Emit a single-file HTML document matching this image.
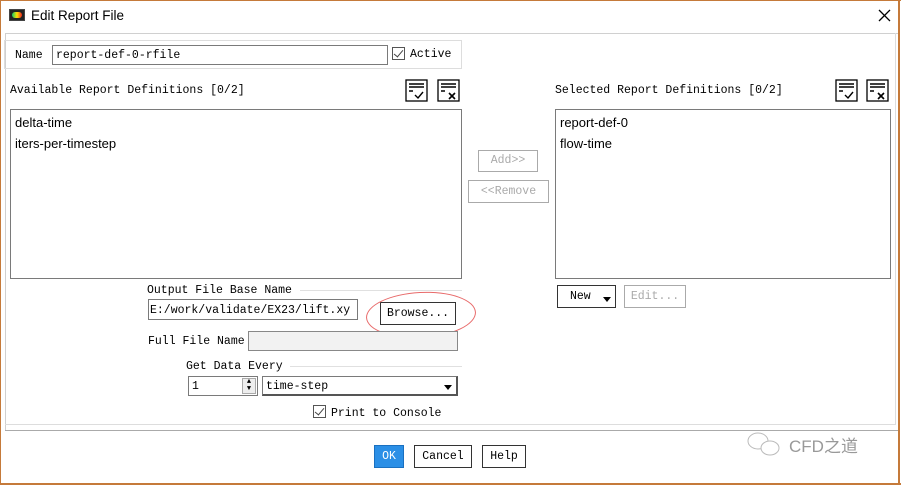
<!DOCTYPE html>
<html><head><meta charset="utf-8"><style>
*{margin:0;padding:0;box-sizing:border-box}
body{width:901px;height:485px;background:#fff;position:relative;overflow:hidden;font-family:"Liberation Mono",monospace;font-size:11.5px;color:#000}
.a{position:absolute}
.mono{font-family:"Liberation Mono","Noto Sans CJK SC",monospace;font-size:11.5px;white-space:nowrap}
.sans{font-family:"Liberation Sans","Noto Sans CJK SC",sans-serif;font-size:13px;white-space:nowrap}
.box{border:1px solid #7a7a7a;background:#fff}
.btn{border:1px solid #333;background:#fff;text-align:center;font-family:"Liberation Mono",monospace;font-size:11.5px;line-height:22px}
.dis{border:1px solid #aaa;color:#aaa}
.chk{border:1px solid #555;width:13px;height:13px;background:#fff}
.chk:after{content:"";position:absolute;left:3px;top:0px;width:4px;height:8px;border:solid #444;border-width:0 1.5px 1.5px 0;transform:rotate(40deg)}
</style></head><body>
<div class="a" style="left:0;top:0;width:901px;height:1px;background:#c57a3a"></div>
<div class="a" style="left:0;top:0;width:1px;height:485px;background:#c57a3a"></div>
<div class="a" style="left:898px;top:0;width:2px;height:485px;background:#c57a3a"></div>
<div class="a" style="left:0;top:483px;width:901px;height:2px;background:#c57a3a"></div>
<!-- title -->
<div class="a" style="left:9px;top:9px;width:16px;height:12px;background:#222;border:1px solid #444"><div style="position:absolute;left:2px;top:2px;width:10px;height:6px;background:linear-gradient(90deg,#1c6,#fd0,#e22);border-radius:3px"></div></div>
<div class="a sans" style="left:31px;top:8px;font-size:13.5px">Edit Report File</div>
<svg class="a" style="left:878px;top:9px" width="13" height="13"><path d="M1 1L12 12M12 1L1 12" stroke="#000" stroke-width="1.3"/></svg>
<div class="a" style="left:5px;top:33px;width:893px;height:1px;background:#d0d0d0"></div>
<div class="a" style="left:5px;top:33px;width:1px;height:398px;background:#d0d0d0"></div>
<!-- name group -->
<div class="a" style="left:4px;top:40px;width:458px;height:29px;border:1px solid #ddd"></div>
<div class="a mono" style="left:15px;top:49px">Name</div>
<div class="a box" style="left:52px;top:45px;width:336px;height:20px"></div>
<div class="a mono" style="left:56px;top:49px">report-def-0-rfile</div>
<div class="a chk" style="left:392px;top:47px"></div>
<div class="a mono" style="left:410px;top:48px">Active</div>
<!-- available -->
<div class="a mono" style="left:10px;top:84px">Available Report Definitions [0/2]</div>
<svg class="a" style="left:405px;top:79px" width="56" height="23"><rect x="1" y="1" width="21" height="21" fill="#fff" stroke="#000" stroke-width="1.3"/><path d="M4 5h15M4 8h15M4 12h4M10 16l3 3 5-6" stroke="#000" stroke-width="1.4" fill="none"/><rect x="33" y="1" width="21" height="21" fill="#fff" stroke="#000" stroke-width="1.3"/><path d="M36 5h15M36 8h15M36 12h4M44 14l6 6M50 14l-6 6" stroke="#000" stroke-width="1.6" fill="none"/></svg>
<div class="a box" style="left:10px;top:109px;width:452px;height:170px"></div>
<div class="a sans" style="left:15px;top:115px">delta-time</div>
<div class="a sans" style="left:15px;top:136px">iters-per-timestep</div>
<!-- middle buttons -->
<div class="a btn dis" style="left:478px;top:150px;width:60px;height:22px;line-height:20px">Add&gt;&gt;</div>
<div class="a btn dis" style="left:468px;top:180px;width:81px;height:23px;line-height:22px">&lt;&lt;Remove</div>
<!-- selected -->
<div class="a mono" style="left:555px;top:84px">Selected Report Definitions [0/2]</div>
<svg class="a" style="left:835px;top:79px" width="56" height="23"><rect x="1" y="1" width="21" height="21" fill="#fff" stroke="#000" stroke-width="1.3"/><path d="M4 5h15M4 8h15M4 12h4M10 16l3 3 5-6" stroke="#000" stroke-width="1.4" fill="none"/><rect x="32" y="1" width="21" height="21" fill="#fff" stroke="#000" stroke-width="1.3"/><path d="M35 5h15M35 8h15M35 12h4M43 14l6 6M49 14l-6 6" stroke="#000" stroke-width="1.6" fill="none"/></svg>
<div class="a box" style="left:555px;top:109px;width:336px;height:170px"></div>
<div class="a sans" style="left:560px;top:115px">report-def-0</div>
<div class="a sans" style="left:560px;top:136px">flow-time</div>
<div class="a btn" style="left:557px;top:285px;width:59px;height:23px;text-align:left;padding-left:12px">New</div>
<div class="a" style="left:603px;top:297px;width:0;height:0;border-left:4px solid transparent;border-right:4px solid transparent;border-top:5px solid #000"></div>
<div class="a btn dis" style="left:624px;top:285px;width:62px;height:23px">Edit...</div>
<!-- output -->
<div class="a mono" style="left:147px;top:284px">Output File Base Name</div>
<div class="a" style="left:300px;top:290px;width:162px;height:1px;background:#e0e0e0"></div>
<div class="a box" style="left:148px;top:299px;width:210px;height:21px"></div>
<div class="a mono" style="left:150px;top:304px">E:/work/validate/EX23/lift.xy</div>
<div class="a btn" style="left:380px;top:302px;width:76px;height:23px">Browse...</div>
<div class="a" style="left:366px;top:292px;width:110px;height:46px;border:1.5px solid #e86a6a;border-radius:50%;transform:rotate(-3deg)"></div>
<div class="a mono" style="left:148px;top:335px">Full File Name</div>
<div class="a" style="left:248px;top:331px;width:210px;height:20px;border:1px solid #888;background:#f2f2f2"></div>
<div class="a mono" style="left:186px;top:360px">Get Data Every</div>
<div class="a" style="left:290px;top:366px;width:172px;height:1px;background:#e0e0e0"></div>
<div class="a box" style="left:188px;top:376px;width:70px;height:20px"></div>
<div class="a mono" style="left:192px;top:380px">1</div>
<div class="a" style="left:242px;top:378px;width:14px;height:16px;border:1px solid #aaa;background:#eee;font-size:7px;line-height:7px;text-align:center">▲<br>▼</div>
<div class="a box" style="left:262px;top:376px;width:196px;height:20px;border-right:2px solid #555;border-bottom:2px solid #555"></div>
<div class="a mono" style="left:266px;top:380px">time-step</div>
<div class="a" style="left:444px;top:385px;width:0;height:0;border-left:4px solid transparent;border-right:4px solid transparent;border-top:5px solid #000"></div>
<div class="a chk" style="left:313px;top:405px"></div>
<div class="a mono" style="left:331px;top:407px">Print to Console</div>
<!-- bottom -->
<div class="a" style="left:5px;top:424px;width:890px;height:1px;background:#ddd"></div>
<div class="a" style="left:895px;top:33px;width:1px;height:392px;background:#ddd"></div>
<div class="a" style="left:5px;top:430px;width:893px;height:1px;background:#aaa"></div>
<div class="a btn" style="left:374px;top:445px;width:30px;height:23px;background:#2b8fe6;color:#fff;border-color:#1a70c0">OK</div>
<div class="a btn" style="left:414px;top:445px;width:58px;height:23px">Cancel</div>
<div class="a btn" style="left:482px;top:445px;width:44px;height:23px">Help</div>
<!-- watermark -->
<svg class="a" style="left:745px;top:430px" width="40" height="30"><ellipse cx="13" cy="11" rx="10" ry="8" fill="none" stroke="#bbb"/><ellipse cx="25" cy="18" rx="9" ry="7" fill="#fff" stroke="#bbb"/></svg>
<div class="a sans" style="left:789px;top:432px;font-size:17px;color:#999">CFD之道</div>
</body></html>
